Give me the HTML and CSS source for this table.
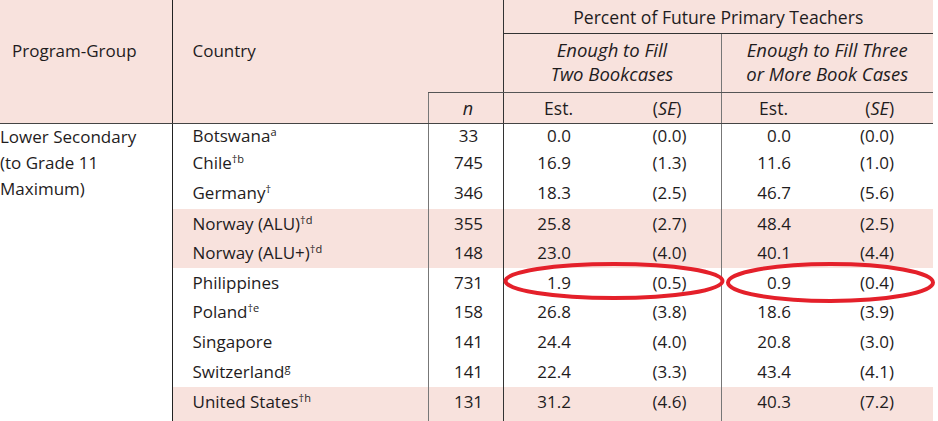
FILE: index.html
```html
<!DOCTYPE html>
<html>
<head>
<meta charset="utf-8">
<link rel="stylesheet" href="styles.css">
</head>
<body>
<div class="wrap">
<table class="tbl">
  <colgroup>
    <col class="c-prog"><col class="c-country"><col class="c-n">
    <col class="c-est1"><col class="c-se1"><col class="c-est2"><col class="c-se2">
  </colgroup>
  <thead>
    <tr class="h-a">
      <th class="h-prog" rowspan="3">Program-Group</th>
      <th class="h-country" rowspan="3">Country</th>
      <th class="h-blank" rowspan="2"></th>
      <th class="h-pct" colspan="4">Percent of Future Primary Teachers</th>
    </tr>
    <tr class="h-b">
      <th class="h-sub h-sub1" colspan="2"><em>Enough to Fill<br>Two Bookcases</em></th>
      <th class="h-sub h-sub2" colspan="2"><em>Enough to Fill Three<br>or More Book Cases</em></th>
    </tr>
    <tr class="h-c">
      <th class="h-n"><em>n</em></th>
      <th class="h-val h-est1">Est.</th>
      <th class="h-val">(<em>SE</em>)</th>
      <th class="h-val h-est2">Est.</th>
      <th class="h-val">(<em>SE</em>)</th>
    </tr>
  </thead>
  <tbody>
    <tr class="r r1">
      <td class="prog" rowspan="10">Lower Secondary<br>(to Grade 11<br>Maximum)</td>
      <td class="country">Botswana<sup class="fn">a</sup></td>
      <td class="n">33</td><td class="v est1">0.0</td><td class="v se1">(0.0)</td><td class="v est2">0.0</td><td class="v se2">(0.0)</td>
    </tr>
    <tr class="r r2">
      <td class="country">Chile<sup class="fn">†b</sup></td>
      <td class="n">745</td><td class="v est1">16.9</td><td class="v se1">(1.3)</td><td class="v est2">11.6</td><td class="v se2">(1.0)</td>
    </tr>
    <tr class="r r3">
      <td class="country">Germany<sup class="fn">†</sup></td>
      <td class="n">346</td><td class="v est1">18.3</td><td class="v se1">(2.5)</td><td class="v est2">46.7</td><td class="v se2">(5.6)</td>
    </tr>
    <tr class="r r4 shade">
      <td class="country">Norway (ALU)<sup class="fn">†d</sup></td>
      <td class="n">355</td><td class="v est1">25.8</td><td class="v se1">(2.7)</td><td class="v est2">48.4</td><td class="v se2">(2.5)</td>
    </tr>
    <tr class="r r5 shade">
      <td class="country">Norway (ALU+)<sup class="fn">†d</sup></td>
      <td class="n">148</td><td class="v est1">23.0</td><td class="v se1">(4.0)</td><td class="v est2">40.1</td><td class="v se2">(4.4)</td>
    </tr>
    <tr class="r r6">
      <td class="country">Philippines</td>
      <td class="n">731</td><td class="v est1">1.9</td><td class="v se1">(0.5)</td><td class="v est2">0.9</td><td class="v se2">(0.4)</td>
    </tr>
    <tr class="r r7">
      <td class="country">Poland<sup class="fn">†e</sup></td>
      <td class="n">158</td><td class="v est1">26.8</td><td class="v se1">(3.8)</td><td class="v est2">18.6</td><td class="v se2">(3.9)</td>
    </tr>
    <tr class="r r8">
      <td class="country">Singapore</td>
      <td class="n">141</td><td class="v est1">24.4</td><td class="v se1">(4.0)</td><td class="v est2">20.8</td><td class="v se2">(3.0)</td>
    </tr>
    <tr class="r r9">
      <td class="country">Switzerland<sup class="fn">g</sup></td>
      <td class="n">141</td><td class="v est1">22.4</td><td class="v se1">(3.3)</td><td class="v est2">43.4</td><td class="v se2">(4.1)</td>
    </tr>
    <tr class="r r10 shade">
      <td class="country">United States<sup class="fn">†h</sup></td>
      <td class="n">131</td><td class="v est1">31.2</td><td class="v se1">(4.6)</td><td class="v est2">40.3</td><td class="v se2">(7.2)</td>
    </tr>
  </tbody>
</table>
<svg class="marks" width="938" height="421" viewBox="0 0 938 421">
  <ellipse cx="614" cy="281" rx="108.5" ry="17" fill="none" stroke="#e4202a" stroke-width="4"/>
  <ellipse cx="830.5" cy="282.5" rx="102.5" ry="18.5" fill="none" stroke="#e4202a" stroke-width="4"/>
</svg>
</div>
</body>
</html>
```
FILE: styles.css
```css
html, body {
  margin: 0;
  padding: 0;
  background: #ffffff;
}
body {
  width: 938px;
  height: 421px;
  overflow: hidden;
  font-family: "Open Sans", "Noto Sans", sans-serif;
  font-size: 17px;
  color: #1f1c1d;
}
.wrap {
  position: relative;
  width: 938px;
  height: 421px;
}
.tbl {
  width: 933px;
  table-layout: fixed;
  border-collapse: collapse;
  border-spacing: 0;
}
.c-prog { width: 172px; }
.c-country { width: 256px; }
.c-n { width: 75px; }
.c-est1 { width: 109px; }
.c-se1 { width: 109px; }
.c-est2 { width: 106px; }
.c-se2 { width: 106px; }

th, td {
  padding: 0;
  font-weight: normal;
  white-space: nowrap;
}
thead th {
  background: #f8e2dd;
  border-bottom: 1px solid #444;
}
em { font-style: italic; }

.h-a { height: 33px; }
.h-b { height: 59px; }
.h-c { height: 31px; }

.h-prog {
  text-align: left;
  vertical-align: top;
  padding: 39px 0 0 12px;
  line-height: 24px;
  border-right: 1px solid #222;
}
.h-country {
  text-align: left;
  vertical-align: top;
  padding: 39px 0 0 20px;
  line-height: 24px;
  border-bottom: 1px solid #444;
}
.h-blank {
  border-bottom: none;
}
.h-pct {
  text-align: center;
  vertical-align: middle;
  border-left: 1px solid #333;
  border-bottom: 1px solid #333;
  line-height: 24px;
  padding-top: 1px;
  font-size: 17.6px;
}
.h-sub {
  text-align: center;
  vertical-align: middle;
  line-height: 24px;
  border-bottom: 1px solid #555;
  padding-bottom: 2px;
  font-size: 18.5px;
}
.h-sub1 { border-left: 1px solid #333; }
.h-sub2 { border-left: 1px solid #777; }
.h-n {
  text-align: center;
  padding-left: 5px;
  border-left: 1px solid #777;
  border-top: 1px solid #555;
  vertical-align: middle;
  font-size: 18px;
}
.h-val {
  text-align: right;
  padding-right: 39px;
  vertical-align: middle;
  font-size: 17.5px;
}
.h-val em { font-size: 18px; }
.h-est1 { border-left: 1px solid #333; }
.h-est2 { border-left: 1px solid #777; }

.r1 { height: 26px; }
.r2 { height: 28px; }
.r3 { height: 32px; }
.r4 { height: 29px; }
.r5 { height: 30px; }
.r6 { height: 29px; }
.r7 { height: 30px; }
.r8 { height: 30px; }
.r9 { height: 30px; }
.r10 { height: 36px; }

td { vertical-align: middle; line-height: 22px; }
.shade td { background: #f8e2dd; }
.shade td.prog { background: #ffffff; }

.prog {
  vertical-align: top;
  text-align: left;
  line-height: 26px;
  padding-top: 0;
  border-right: 1px solid #222;
  background: #ffffff;
}
.country {
  text-align: left;
  padding-left: 20px;
}
.n {
  text-align: center;
  padding-left: 6px;
  border-left: 1px solid #777;
}
.v { text-align: right; }
.est1 { padding-right: 41px; border-left: 1px solid #333; }
.se1 { padding-right: 34px; }
.est2 { padding-right: 36px; border-left: 1px solid #777; }
.se2 { padding-right: 39px; }

.r10 td { vertical-align: top; padding-top: 4px; }

.fn {
  font-size: 11px;
  line-height: 0;
  vertical-align: 6px;
}

.marks {
  position: absolute;
  left: 0;
  top: 0;
  pointer-events: none;
}
```
